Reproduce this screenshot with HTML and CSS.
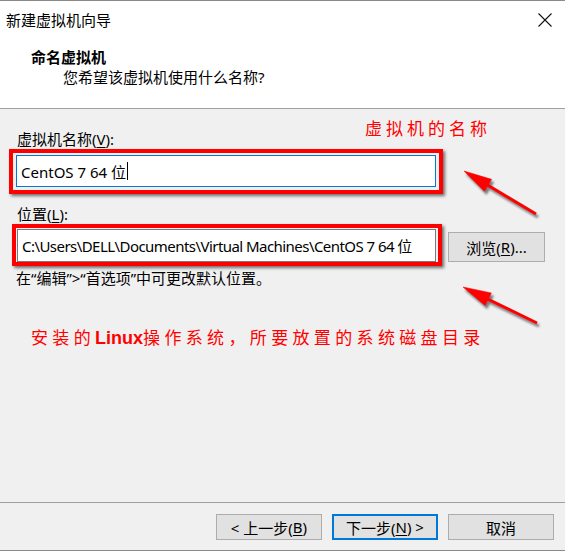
FILE: index.html
```html
<!DOCTYPE html>
<html lang="zh-CN">
<head>
<meta charset="utf-8">
<title>新建虚拟机向导</title>
<link rel="stylesheet" href="styles.css">
</head>
<body>
<div class="window">
  <div class="titlebar">
    <span class="title">新建虚拟机向导</span>
    <svg class="close" width="14" height="14" viewBox="0 0 14 14"><path d="M0.5 0.5L13.5 13.5M13.5 0.5L0.5 13.5" stroke="#111" stroke-width="1.1" fill="none"/></svg>
  </div>
  <div class="header">
    <div class="heading">命名虚拟机</div>
    <div class="subtitle">您希望该虚拟机使用什么名称?</div>
  </div>
  <div class="body">
    <div class="label">虚拟机名称(<u>V</u>):</div>
    <div class="mark mark-name">
      <div class="field focused">CentOS 7 64 位<span class="caret"></span></div>
    </div>
    <div class="label label-loc">位置(<u>L</u>):</div>
    <div class="loc-row">
      <div class="mark mark-loc">
        <div class="field path">C:\Users\DELL\Documents\Virtual Machines\CentOS 7 64 位</div>
      </div>
      <div class="btn browse">浏览(<u>R</u>)...</div>
    </div>
    <div class="hint">在“编辑”&gt;“首选项”中可更改默认位置。</div>
    <div class="note note-path">安装的<b>Linux</b>操作系统，所要放置的系统磁盘目录</div>
    <div class="note note-name">虚拟机的名称</div>
  </div>
  <div class="footer">
    <div class="btn">&lt; 上一步(<u>B</u>)</div>
    <div class="btn default">下一步(<u>N</u>) &gt;</div>
    <div class="btn">取消</div>
  </div>
  <svg class="arrows" width="565" height="551" viewBox="0 0 565 551">
    <defs>
      <filter id="blur" x="-20%" y="-20%" width="140%" height="140%"><feGaussianBlur stdDeviation="1.3"/></filter>
    </defs>
    <g transform="translate(2,3)" filter="url(#blur)" fill="#555" stroke="#555" opacity="0.75">
      <line x1="536" y1="214" x2="480" y2="180.5" stroke-width="3"/>
      <polygon points="464,171 484.4,191.3 491.6,179.3"/>
      <line x1="537" y1="323" x2="480" y2="295.3" stroke-width="3"/>
      <polygon points="463,287 485.1,305.5 491.3,292.9"/>
    </g>
    <g fill="#f00" stroke="#f00">
      <line x1="536" y1="214" x2="480" y2="180.5" stroke-width="3"/>
      <polygon points="464,171 484.4,191.3 491.6,179.3" stroke-width="0.5"/>
      <line x1="537" y1="323" x2="480" y2="295.3" stroke-width="3"/>
      <polygon points="463,287 485.1,305.5 491.3,292.9" stroke-width="0.5"/>
    </g>
  </svg>
</div>
</body>
</html>
```

FILE: styles.css
```css
html, body {
  margin: 0;
  padding: 0;
}
body {
  background: #f0f0f0;
  font-family: "Noto Sans", "Noto Sans CJK SC", sans-serif;
  font-size: 15px;
  color: #000;
}
.window {
  position: relative;
  width: 565px;
  height: 551px;
  box-sizing: border-box;
  border-top: 1px solid #8a8a8a;
  border-bottom: 1px solid #8a8a8a;
  display: flex;
  flex-direction: column;
  background: #f0f0f0;
  overflow: hidden;
}
.titlebar {
  height: 37px;
  background: #fff;
  display: flex;
  align-items: center;
  justify-content: space-between;
  padding: 0 13px 0 6px;
}
.title {
  font-size: 15px;
  line-height: 20px;
}
.header {
  height: 70px;
  background: #fff;
  border-bottom: 1px solid #a0a0a0;
}
.heading {
  font-weight: bold;
  padding-left: 31px;
  line-height: 20px;
  margin-top: 9px;
}
.subtitle {
  padding-left: 63px;
  line-height: 20px;
  margin-top: 0;
}
.body {
  position: relative;
  flex: 1;
  padding-top: 21px;
}
.label {
  line-height: 19px;
  padding-left: 17px;
}
.label u, .btn u {
  text-decoration-thickness: 1px;
  text-underline-offset: 2px;
}
.mark {
  border: 4px solid #f00;
  box-shadow: 2px 2px 3px rgba(0, 0, 0, 0.55);
  box-sizing: border-box;
}
.mark-name {
  margin-left: 9px;
  width: 434px;
  padding: 2px 3px 3px 3px;
}
.field {
  background: #fff;
  border: 1px solid #7a7a7a;
  height: 32px;
  box-sizing: border-box;
  padding-left: 4px;
  display: flex;
  align-items: center;
  white-space: nowrap;
  overflow: hidden;
}
.field.focused {
  border-color: #0078d7;
}
.field.path {
  letter-spacing: -0.55px;
}
.caret {
  display: inline-block;
  width: 1px;
  height: 18px;
  background: #000;
  margin-left: 1px;
}
.label-loc {
  margin-top: 11px;
}
.loc-row {
  display: flex;
  align-items: flex-start;
}
.mark-loc {
  margin-left: 12px;
  width: 430px;
  padding: 1px 2px 0 1px;
}
.mark-loc .field {
  height: 33px;
}
.btn {
  box-sizing: border-box;
  background: #e1e1e1;
  border: 1px solid #adadad;
  display: flex;
  align-items: center;
  justify-content: center;
  white-space: nowrap;
}
.browse {
  margin-left: 6px;
  margin-top: 8px;
  width: 97px;
  height: 30px;
}
.hint {
  line-height: 19px;
  margin-top: 3px;
  padding-left: 16px;
}
.note {
  color: #f00;
  font-size: 17px;
  letter-spacing: 4px;
  line-height: 20px;
}
.note-path {
  margin-top: 40px;
  padding-left: 31px;
  letter-spacing: 4.35px;
}
.note b {
  font-family: "Liberation Sans", sans-serif;
  font-size: 18px;
  letter-spacing: 0;
}
.note-name {
  position: absolute;
  left: 365px;
  top: 10px;
}
.footer {
  height: 48px;
  box-sizing: border-box;
  border-top: 1px solid #a0a0a0;
  display: flex;
  justify-content: flex-end;
  align-items: flex-start;
  gap: 10px;
  padding: 11px 11px 0 0;
}
.footer .btn {
  width: 106px;
  height: 26px;
}
.footer .btn.default {
  border: 2px solid #0078d7;
}
.arrows {
  position: absolute;
  left: 0;
  top: -1px;
  pointer-events: none;
}
```
